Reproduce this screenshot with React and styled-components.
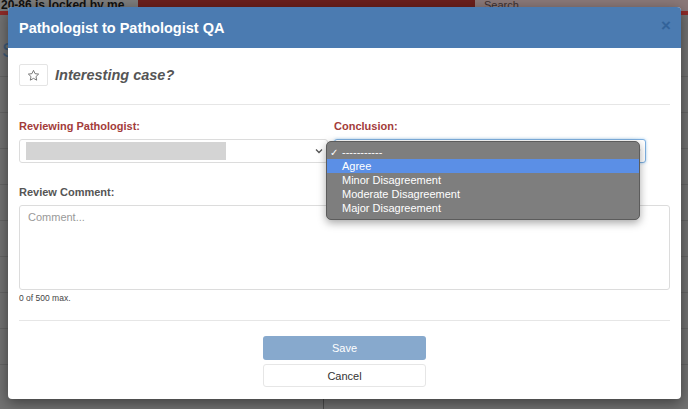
import styled, { createGlobalStyle } from "styled-components";

const GlobalStyle = createGlobalStyle`
  html, body {
    margin: 0;
    padding: 0;
    width: 688px;
    height: 409px;
    overflow: hidden;
    font-family: "Liberation Sans", Arial, Helvetica, sans-serif;
  }
  * {
    box-sizing: border-box;
  }
`;

const Page = styled.div`
  position: relative;
  width: 688px;
  height: 409px;
  background: #727272;
  overflow: hidden;
`;

const TopBar = styled.div`
  display: flex;
  height: 11px;
  background: #6b1f1c;
`;

const LockText = styled.div`
  width: 138px;
  background: #7c7c7c;
  color: #111;
  font-size: 12px;
  font-weight: bold;
  line-height: 11px;
  white-space: nowrap;
  padding-left: 1px;
`;

const Spacer = styled.div`
  flex: 1;
`;

const SearchBox = styled.div`
  width: 213px;
  background: #8a7878;
  color: #3b2f2f;
  font-size: 11px;
  line-height: 11px;
  padding-left: 9px;
`;

const RedStrip = styled.div`
  height: 4px;
  background: #8e2b28;
`;

const BackRows = styled.div`
  display: flex;
  flex-direction: column;
`;

const BackRow = styled.div`
  height: ${(p) => p.$h}px;
  border-bottom: 1px solid #656565;
  color: #3e5a78;
  font-size: 20px;
  padding-left: 2px;
  overflow: hidden;
`;

const Overlay = styled.div`
  position: absolute;
  left: 8px;
  top: 7px;
  width: 673px;
  height: 392px;
  background: #fff;
  border-radius: 4px;
  box-shadow: 0 4px 14px rgba(0, 0, 0, 0.45);
  display: flex;
  flex-direction: column;
  overflow: hidden;
`;

const Header = styled.div`
  height: 41px;
  background: #4b7bb1;
  display: flex;
  align-items: center;
  justify-content: space-between;
  padding: 0 10px 0 11px;
  flex-shrink: 0;
`;

const Title = styled.h4`
  margin: 0;
  color: #fff;
  font-size: 14.5px;
  font-weight: bold;
`;

const Close = styled.span`
  color: #2f5f96;
  font-size: 17px;
  font-weight: bold;
  line-height: 1;
  margin-top: -4px;
  opacity: 0.85;
`;

const Body = styled.div`
  padding: 16px 11px 0 11px;
  display: flex;
  flex-direction: column;
`;

const StarRow = styled.div`
  display: flex;
  align-items: center;
  gap: 7px;
  height: 22px;
`;

const StarButton = styled.div`
  width: 29px;
  height: 22px;
  border: 1px solid #e4e4e4;
  border-radius: 2px;
  display: flex;
  align-items: center;
  justify-content: center;
`;

const StarLabel = styled.span`
  font-size: 14.5px;
  font-weight: bold;
  font-style: italic;
  color: #555;
`;

const Rule = styled.hr`
  border: 0;
  border-top: 1px solid #e6e6e6;
  margin: ${(p) => p.$m};
  width: 100%;
`;

const FieldsRow = styled.div`
  display: grid;
  grid-template-columns: 309px 312px;
  column-gap: 6px;
`;

const Field = styled.div`
  position: relative;
  display: flex;
  flex-direction: column;
`;

const Label = styled.label`
  font-size: 11px;
  font-weight: bold;
  color: ${(p) => (p.$error ? "#a33c3a" : "#555")};
  line-height: 13px;
  margin-bottom: ${(p) => p.$mb || 6}px;
`;

const SelectBox = styled.div`
  height: 24px;
  border: 1px solid ${(p) => (p.$focus ? "#7fb0e0" : "#dcdcdc")};
  box-shadow: ${(p) => (p.$focus ? "0 0 3px rgba(102,175,233,0.6)" : "none")};
  border-radius: 3px;
  display: flex;
  align-items: center;
  padding: 0 4px 0 6px;
  background: #fff;
`;

const Redacted = styled.div`
  width: 200px;
  height: 18px;
  background: #d4d4d4;
`;

const Chevron = styled.svg`
  margin-left: auto;
`;

const Popup = styled.ul`
  position: absolute;
  left: -8px;
  top: 21px;
  width: 314px;
  margin: 0;
  padding: 3px 0 4px;
  list-style: none;
  background: #7e7e7e;
  border: 1px solid #5c5c5c;
  border-radius: 5px;
  box-shadow: 0 3px 8px rgba(0, 0, 0, 0.35);
  z-index: 2;
`;

const Option = styled.li`
  height: 14px;
  display: flex;
  align-items: center;
  padding-left: 15px;
  position: relative;
  font-size: 11px;
  color: #fff;
  background: ${(p) => (p.$active ? "#5b8fe6" : "transparent")};
`;

const Check = styled.span`
  position: absolute;
  left: 3px;
  font-size: 10px;
`;

const CommentBox = styled.div`
  height: 85px;
  border: 1px solid #dcdcdc;
  border-radius: 3px;
  padding: 5px 8px;
  color: #999;
  font-size: 11px;
`;

const Counter = styled.div`
  font-size: 8.5px;
  color: #444;
  margin-top: 3px;
`;

const Actions = styled.div`
  display: flex;
  flex-direction: column;
  align-items: center;
  gap: 4px;
`;

const Button = styled.div`
  width: 163px;
  height: ${(p) => (p.$primary ? 24 : 23)}px;
  border-radius: 3px;
  display: flex;
  align-items: center;
  justify-content: center;
  font-size: 11px;
  background: ${(p) => (p.$primary ? "#87a9cd" : "#fff")};
  color: ${(p) => (p.$primary ? "#fff" : "#333")};
  border: ${(p) => (p.$primary ? "none" : "1px solid #e6e6e6")};
`;

const BottomDivider = styled.div`
  position: absolute;
  left: 323px;
  top: 399px;
  width: 1px;
  height: 10px;
  background: #4a4a4a;
`;

const Star = () => (
  <svg width="13" height="13" viewBox="0 0 24 24" fill="none" stroke="#666" strokeWidth="1.6" strokeLinejoin="round">
    <path d="M12 2.5l2.9 6.1 6.6.8-4.9 4.6 1.3 6.6L12 17.3l-5.9 3.3 1.3-6.6L2.5 9.4l6.6-.8z" />
  </svg>
);

const Caret = () => (
  <Chevron width="8" height="6" viewBox="0 0 8 6">
    <path d="M1 1.5l3 3 3-3" fill="none" stroke="#555" strokeWidth="1.3" />
  </Chevron>
);

const options = ["Agree", "Minor Disagreement", "Moderate Disagreement", "Major Disagreement"];

export default function App() {
  return (
    <Page>
      <GlobalStyle />
      <TopBar>
        <LockText>20-86 is locked by me</LockText>
        <Spacer />
        <SearchBox>Search...</SearchBox>
      </TopBar>
      <RedStrip />
      <BackRows>
        <BackRow $h={62}>
          <div style={{ marginTop: 24 }}>S</div>
        </BackRow>
        <BackRow $h={36} />
        <BackRow $h={36} />
        <BackRow $h={36} />
        <BackRow $h={36} />
        <BackRow $h={36} />
        <BackRow $h={36} />
        <BackRow $h={36} />
        <BackRow $h={36} />
      </BackRows>
      <BottomDivider />

      <Overlay>
        <Header>
          <Title>Pathologist to Pathologist QA</Title>
          <Close>×</Close>
        </Header>
        <Body>
          <StarRow>
            <StarButton>
              <Star />
            </StarButton>
            <StarLabel>Interesting case?</StarLabel>
          </StarRow>
          <Rule $m="18px 0 15px" />
          <FieldsRow>
            <Field>
              <Label $error>Reviewing Pathologist:</Label>
              <SelectBox>
                <Redacted />
                <Caret />
              </SelectBox>
            </Field>
            <Field>
              <Label $error>Conclusion:</Label>
              <SelectBox $focus>
                <Caret />
              </SelectBox>
              <Popup>
                <Option>
                  <Check>✓</Check>-----------
                </Option>
                {options.map((o, i) => (
                  <Option key={o} $active={i === 0}>
                    {o}
                  </Option>
                ))}
              </Popup>
            </Field>
          </FieldsRow>
          <div style={{ height: 23 }} />
          <Label $mb={6}>Review Comment:</Label>
          <CommentBox>Comment...</CommentBox>
          <Counter>0 of 500 max.</Counter>
          <Rule $m="17px 0 15px" />
          <Actions>
            <Button $primary>Save</Button>
            <Button>Cancel</Button>
          </Actions>
        </Body>
      </Overlay>
    </Page>
  );
}
